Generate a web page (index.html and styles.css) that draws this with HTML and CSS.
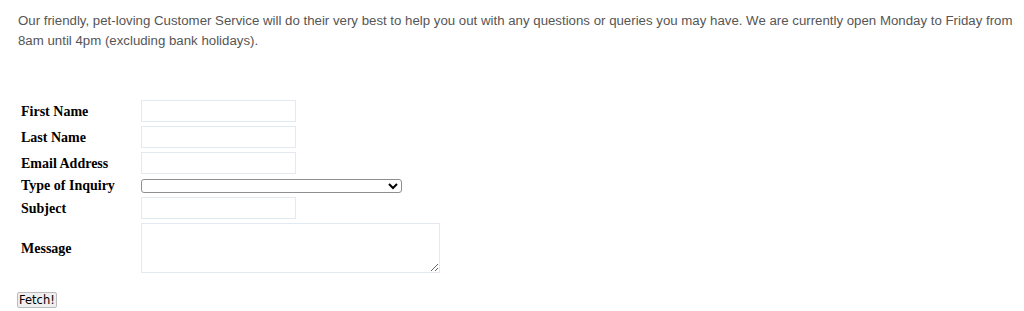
FILE: index.html
```html
<!DOCTYPE html>
<html>
<head>
<meta charset="utf-8">
<link rel="stylesheet" href="styles.css">
</head>
<body>
<div class="page">
  <p class="intro">Our friendly, pet-loving Customer Service will do their very best to help you out with any questions or queries you may have. We are currently open Monday to Friday from 8am until 4pm (excluding bank holidays).</p>
  <form class="contact">
    <table class="fields">
      <tr><td class="label">First Name</td><td><input class="text" type="text"></td></tr>
      <tr><td class="label">Last Name</td><td><input class="text" type="text"></td></tr>
      <tr><td class="label">Email Address</td><td><input class="text" type="text"></td></tr>
      <tr><td class="label">Type of Inquiry</td><td><select class="inquiry"><option></option></select></td></tr>
      <tr><td class="label">Subject</td><td><input class="text" type="text"></td></tr>
      <tr><td class="label">Message</td><td><textarea class="message"></textarea></td></tr>
    </table>
    <button class="fetch" type="button">Fetch!</button>
  </form>
</div>
</body>
</html>
```

FILE: styles.css
```css
html, body {
  margin: 0;
  background: #fff;
}
.page {
  padding: 11px 0 0 18px;
}
.intro {
  margin: 0;
  font-family: "Liberation Sans", Arial, sans-serif;
  font-size: 13.25px;
  line-height: 20px;
  color: #555;
}
.contact {
  margin-top: 46px;
}
.fields {
  border-spacing: 2px;
  margin-left: 0;
}
.fields td {
  padding: 1px;
  vertical-align: middle;
}
.label {
  width: 116px;
  font-family: "Liberation Serif", "Times New Roman", serif;
  font-weight: bold;
  font-size: 14px;
  line-height: 15px;
  color: #000;
}
.text {
  box-sizing: border-box;
  display: block;
  width: 155px;
  height: 22px;
  margin: 0;
  border: 1px solid #e3e9f0;
  border-radius: 0;
  padding: 2px 4px;
  background: #fff;
  font-family: "Liberation Sans", Arial, sans-serif;
  font-size: 13px;
}
.inquiry {
  box-sizing: border-box;
  display: block;
  width: 261px;
  height: 14px;
  margin: 0;
  font-size: 10px;
  border: 1px solid #8f8f8f;
  border-radius: 3px;
  background: #fff;
}
.message {
  box-sizing: border-box;
  display: block;
  width: 299px;
  height: 50px;
  margin: 0;
  border: 1px solid #e3e9f0;
  padding: 2px;
  background: #fff;
}
.fetch {
  display: block;
  margin: 16px 0 0 -1px;
  padding: 0 1px;
  height: 16px;
  font-family: "DejaVu Sans", sans-serif;
  font-size: 11.5px;
  line-height: 14px;
  color: #000;
  background: #efefef;
  border: 1px solid #bbb;
  border-radius: 2px;
}
```
